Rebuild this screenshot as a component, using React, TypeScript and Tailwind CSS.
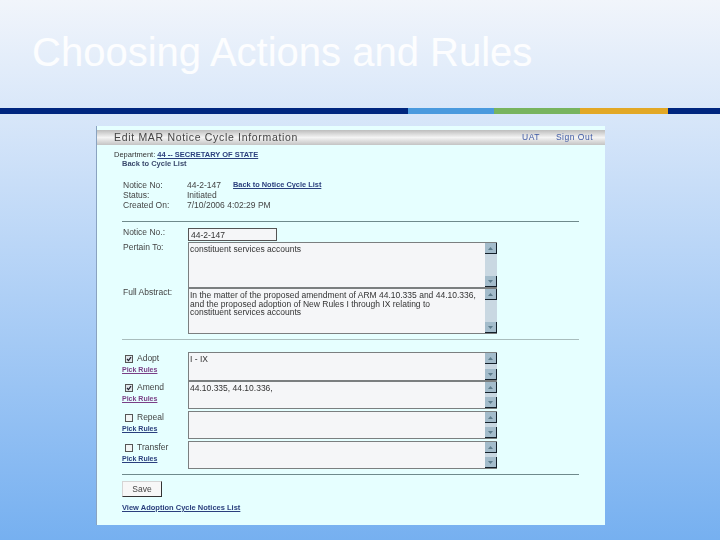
import React from 'react'

const rules = [
  { label: 'Adopt', checked: true, visited: true, text: 'I - IX', h: 'h-[29px]', mt: 'mt-0' },
  { label: 'Amend', checked: true, visited: true, text: '44.10.335, 44.10.336,', h: 'h-[28px]', mt: 'mt-0' },
  { label: 'Repeal', checked: false, visited: false, text: '', h: 'h-[28px]', mt: 'mt-[2px]' },
  { label: 'Transfer', checked: false, visited: false, text: '', h: 'h-[28px]', mt: 'mt-[2px]' },
]

const ScrollButton = ({ up }: { up: boolean }) => (
  <div className="w-[12px] h-[11px] shrink-0 flex items-center justify-center bg-[#a3bccb] border-r border-b border-[#14202a]">
    <svg width="7" height="5" viewBox="0 0 7 5">
      <path d={up ? 'M3.5 1 L6 4 H1 Z' : 'M1 1 H6 L3.5 4 Z'} fill="#5c7c8c" />
    </svg>
  </div>
)

// fake win-style text box with the little scrollbar on the right
const TextBox = ({ height, children }: { height: string; children?: React.ReactNode }) => (
  <div className={`w-[309px] ${height} flex bg-[#f5f6f8] border-t border-l border-b border-[#7b7f80]`}>
    <div className="flex-1 pl-[1px] pr-[2px] pt-[2px] text-[8.5px] leading-[8.6px] text-[#333]">{children}</div>
    <div className="w-[12px] bg-[#c9d8e2] flex flex-col justify-between">
      <ScrollButton up />
      <ScrollButton up={false} />
    </div>
  </div>
)

const Info = ({ label, value, link }: { label: string; value: string; link?: string }) => (
  <div className="flex h-[10px] items-center text-[8.5px] text-[#444]">
    <span className="w-[65px] pl-[1px]">{label}</span>
    <span>{value}</span>
    {link && <a className="ml-[12px] text-[7.4px] font-bold text-[#2a3f7d] underline">{link}</a>}
  </div>
)

export default function App() {
  return (
    <div className="w-[720px] h-[540px] overflow-hidden flex flex-col bg-linear-to-b from-[#f1f5fb] via-[#d7e6f9] via-[22%] to-[#76b0f0] font-['Liberation_Sans',sans-serif]">
      <div className="h-[108px] pl-[32px] pt-[29px]">
        <h1 className="text-[40px] leading-[46px] text-white/90">Choosing Actions and Rules</h1>
      </div>

      <div className="h-[6px] flex shrink-0 bg-[#00267f]">
        <div className="w-[408px]" />
        <div className="w-[86px] bg-[#4a9ade]" />
        <div className="w-[86px] bg-[#78b45e]" />
        <div className="w-[88px] bg-[#e2a826]" />
      </div>

      <div className="ml-[96px] mt-[12px] w-[509px] h-[399px] pt-[4px] bg-[#e6ffff] blur-[0.4px] border-l border-[#8aa3c0]">
        <div className="h-[15px] flex items-center justify-between pl-[17px] pr-[12px] bg-linear-to-b from-[#bdbdbd] via-[#f4f4f4] to-[#c4c4c4]">
          <span className="text-[10.5px] tracking-[0.68px] text-[#444]">Edit MAR Notice Cycle Information</span>
          <div className="flex gap-[16px] text-[8.5px] tracking-[0.5px] text-[#3f5aa5]">
            <span>UAT</span>
            <span>Sign Out</span>
          </div>
        </div>

        <div className="pl-[17px] pt-[5px] text-[7.5px] leading-[9px]">
          <div className="text-[#333]">
            Department: <a className="font-bold text-[#2a3f7d] underline">44 -- SECRETARY OF STATE</a>
          </div>
          <div className="pl-[8px] font-bold text-[#3a4a6d]">Back to Cycle List</div>
        </div>

        <div className="pl-[25px] pt-[12px]">
          <Info label="Notice No:" value="44-2-147" link="Back to Notice Cycle List" />
          <Info label="Status:" value="Initiated" />
          <Info label="Created On:" value="7/10/2006 4:02:29 PM" />
        </div>

        <div className="ml-[25px] mt-[11px] w-[457px] border-t border-[#6f8a8c]" />

        <div className="pl-[25px] pt-[6px] text-[8.5px] leading-[9px] text-[#444]">
          <div className="flex">
            <span className="w-[66px] pl-[1px]">Notice No.:</span>
            <div className="w-[89px] h-[13px] pl-[2px] leading-[12px] bg-[#f5f6f8] border border-[#555] text-[#333]">44-2-147</div>
          </div>
          <div className="flex mt-[1px]">
            <span className="w-[66px] pl-[1px] pt-[1px]">Pertain To:</span>
            <TextBox height="h-[46px]">constituent services accounts</TextBox>
          </div>
          <div className="flex">
            <span className="w-[66px] pl-[1px]">Full Abstract:</span>
            <TextBox height="h-[46px]">
              In the matter of the proposed amendment of ARM 44.10.335 and 44.10.336,
              <br />
              and the proposed adoption of New Rules I through IX relating to
              <br />
              constituent services accounts
            </TextBox>
          </div>
        </div>

        <div className="ml-[25px] mt-[5px] w-[457px] border-t border-[#a9bdbd]" />

        <div className="pl-[25px] pt-[12px]">
          {rules.map((r) => (
            <div key={r.label} className={`flex ${r.mt}`}>
              <div className="w-[66px]">
                <div className="flex items-center h-[13px] pl-[3px] gap-[4px] text-[8.5px] text-[#444]">
                  <span className={`w-[8px] h-[8px] border border-[#555] flex items-center justify-center ${r.checked ? 'bg-[#dfe6ea]' : 'bg-[#f2f5f5]'}`}>
                    {r.checked && (
                      <svg width="6" height="6" viewBox="0 0 6 6">
                        <path d="M1 3 L2.5 4.6 L5 1.2" fill="none" stroke="#223" strokeWidth="1.2" />
                      </svg>
                    )}
                  </span>
                  <span>{r.label}</span>
                </div>
                <a className={`block text-[7px] leading-[9px] font-bold underline ${r.visited ? 'text-[#7a3f86]' : 'text-[#2a3f7d]'}`}>Pick Rules</a>
              </div>
              <TextBox height={r.h}>{r.text}</TextBox>
            </div>
          ))}
        </div>

        <div className="ml-[25px] mt-[5px] w-[457px] border-t border-[#6f8a8c]" />

        <div className="pl-[25px] pt-[6px]">
          <button className="block w-[40px] h-[16px] text-[8.5px] text-[#444] bg-[#f7f7f7] border border-[#d5d5d5] border-r-[#333] border-b-[#333]">Save</button>
          <a className="block mt-[6px] text-[7.5px] leading-[9px] font-bold text-[#2a3f7d] underline">View Adoption Cycle Notices List</a>
        </div>
      </div>
    </div>
  )
}
